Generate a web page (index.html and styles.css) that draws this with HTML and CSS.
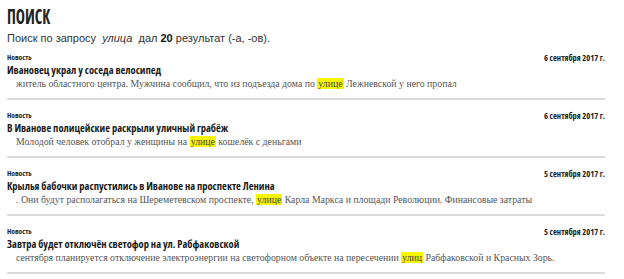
FILE: index.html
```html
<!DOCTYPE html>
<html lang="ru">
<head>
<meta charset="utf-8">
<title>Поиск</title>
<link rel="stylesheet" href="styles.css">
</head>
<body>
<div class="page">
  <header class="head">
    <h1 class="head-title"><span>ПОИСК</span></h1>
    <p class="head-sub">Поиск по запросу&nbsp; <i>улица</i> &nbsp;дал <b>20</b> результат (-а, -ов).</p>
  </header>
  <ul class="results">
    <li class="item">
      <div class="meta"><span class="kind">Новость</span><span class="date">6 сентября 2017 г.</span></div>
      <a class="title">Ивановец украл у соседа велосипед</a>
      <p class="snippet">житель областного центра. Мужчина сообщил, что из подъезда дома по <mark>улице</mark> Лежневской у него пропал</p>
    </li>
    <li class="item">
      <div class="meta"><span class="kind">Новость</span><span class="date">6 сентября 2017 г.</span></div>
      <a class="title">В Иванове полицейские раскрыли уличный грабёж</a>
      <p class="snippet">Молодой человек отобрал у женщины на <mark>улице</mark> кошелёк с деньгами</p>
    </li>
    <li class="item">
      <div class="meta"><span class="kind">Новость</span><span class="date">5 сентября 2017 г.</span></div>
      <a class="title">Крылья бабочки распустились в Иванове на проспекте Ленина</a>
      <p class="snippet">. Они будут располагаться на Шереметевском проспекте, <mark>улице</mark> Карла Маркса и площади Революции. Финансовые затраты</p>
    </li>
    <li class="item">
      <div class="meta"><span class="kind">Новость</span><span class="date">5 сентября 2017 г.</span></div>
      <a class="title">Завтра будет отключён светофор на ул. Рабфаковской</a>
      <p class="snippet">сентября планируется отключение электроэнергии на светофорном объекте на пересечении <mark>улиц</mark> Рабфаковской и Красных Зорь.</p>
    </li>
  </ul>
</div>
</body>
</html>
```
FILE: styles.css
```css
html, body {
  margin: 0;
  padding: 0;
  background: #fff;
}
.page {
  width: 598px;
  padding-left: 7px;
}
.head-title {
  margin: 0;
  padding-top: 4px;
  height: 24px;
  line-height: 24px;
  font-family: "Open Sans", sans-serif;
  font-stretch: 75%;
  font-weight: 700;
  font-size: 21px;
  color: #222;
}
.head-title span {
  display: inline-block;
  transform: scaleX(0.74);
  transform-origin: left center;
}
.head-sub {
  margin: 4px 0 0;
  line-height: 13px;
  font-family: "Liberation Sans", Arial, sans-serif;
  font-size: 11px;
  color: #333;
}
.head-sub b { color: #111; }
.results {
  list-style: none;
  margin: 0;
  padding: 0;
}
.item {
  padding: 10px 0 8px;
  border-bottom: 2px solid #dcdcdc;
}
.item:first-child {
  padding-top: 7px;
}
.meta {
  display: flex;
  justify-content: space-between;
  align-items: baseline;
  height: 10px;
  line-height: 10px;
  margin-bottom: 2px;
  font-family: "Open Sans", sans-serif;
  font-stretch: 75%;
  font-weight: 700;
  color: #222;
}
.kind {
  font-size: 7.5px;
}
.date {
  font-size: 8.5px;
  position: relative;
  top: 1px;
}
.title {
  display: block;
  line-height: 13px;
  font-family: "Open Sans", sans-serif;
  font-stretch: 75%;
  font-weight: 700;
  font-size: 10.5px;
  color: #1a1a1a;
}
.snippet {
  margin: 0;
  padding-left: 9px;
  line-height: 13px;
  font-family: "Liberation Serif", "Times New Roman", serif;
  font-size: 9.8px;
  color: #555;
  white-space: nowrap;
}
mark {
  background: #f7f500;
  color: #444;
  padding: 0 1px;
}
```
